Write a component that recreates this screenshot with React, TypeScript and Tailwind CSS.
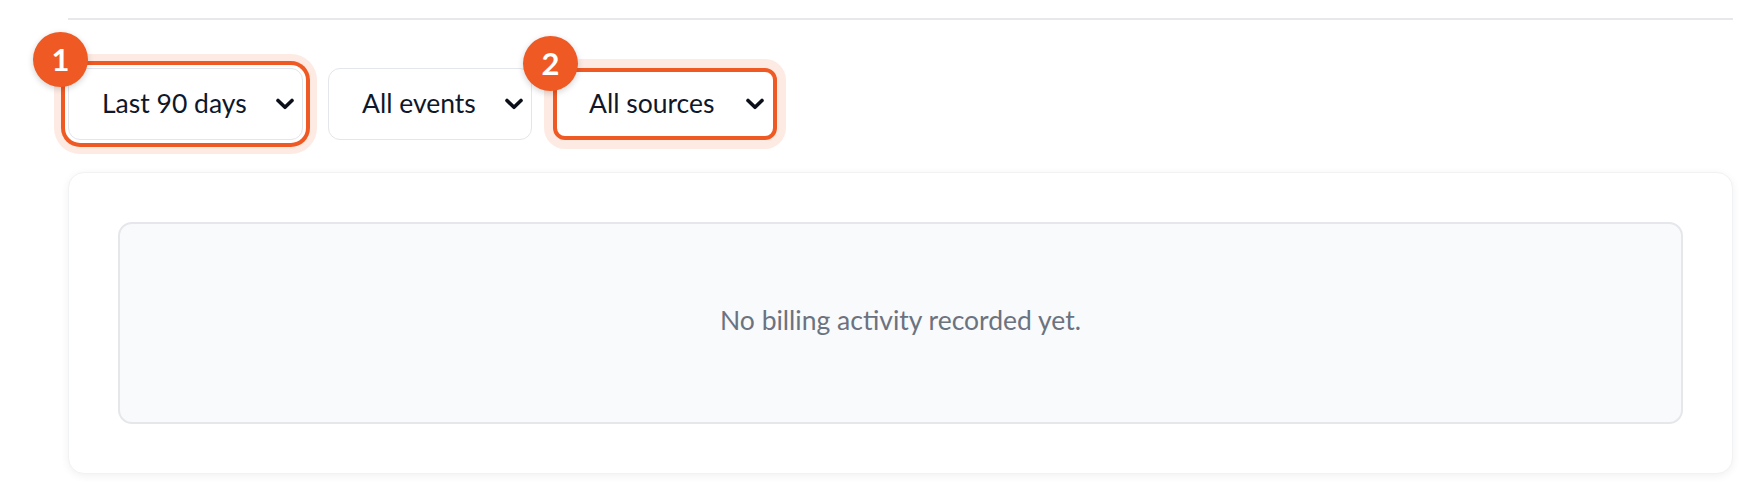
import React from 'react';

type FilterProps = {
  label: string;
  badge?: number;
  badgeClass?: string;
  ring?: 'gap' | 'tight';
  widthClass: string;
};

const Chevron = () => (
  <svg width="20" height="12" viewBox="0 0 20 12" fill="none" className="shrink-0">
    <polyline points="3,2.5 10,9.3 17,2.5" stroke="#0b0f1a" strokeWidth="3.6" strokeLinecap="round" strokeLinejoin="round" />
  </svg>
);

const FilterSelect: React.FC<FilterProps> = ({ label, badge, badgeClass, ring, widthClass }) => {
  // highlight rings drawn as stacked box-shadows
  const ringClass =
    ring === 'gap'
      ? 'border-[#e3e6ea] pl-[33px] pr-[7px] shadow-[0_0_0_3px_#ffffff,0_0_0_7px_#ef5a24,0_0_0_14px_rgba(239,90,36,0.13)]'
      : ring === 'tight'
      ? 'border-[#ef5a24] border-[4px] pl-[32px] pr-[8px] shadow-[0_0_0_9px_rgba(239,90,36,0.13)]'
      : 'border-[#e3e6ea] pl-[33px] pr-[7px]';

  return (
    <div className="relative">
      <button
        className={`flex h-[72px] items-center justify-between rounded-[12px] border bg-white ${widthClass} ${ringClass}`}
      >
        <span className="-mt-[2px] text-[26.5px] leading-none text-[#0f172a]">{label}</span>
        <Chevron />
      </button>
      {badge !== undefined && (
        <span
          className={`absolute flex h-[55px] w-[55px] items-center justify-center rounded-full bg-[#ef5a24] text-[31px] font-bold text-white shadow-[0_2px_6px_rgba(0,0,0,0.18)] ${badgeClass}`}
        >
          {badge}
        </span>
      )}
    </div>
  );
};

export default function App() {
  return (
    <div className="min-h-[504px] bg-white pl-[68px] pr-[31px] pt-[18px]" style={{ fontFamily: 'Lato, "Noto Sans", sans-serif' }}>
      <div className="h-[2px] bg-[#e6e8eb]" />

      <div className="mt-[48px] flex items-center gap-[25px]">
        <FilterSelect
          label="Last 90 days"
          badge={1}
          badgeClass="-left-[35px] -top-[36px]"
          ring="gap"
          widthClass="w-[235px]"
        />
        <FilterSelect label="All events" widthClass="w-[204px]" />
        <div className="-ml-[4px]">
          <FilterSelect
            label="All sources"
            badge={2}
            badgeClass="-left-[30px] -top-[32px]"
            ring="tight"
            widthClass="w-[224px]"
          />
        </div>
      </div>

      <div className="mt-[32px] rounded-[16px] border border-[#f1f2f4] bg-white p-[49px] shadow-[0_2px_8px_rgba(0,0,0,0.06)]">
        <div className="flex h-[202px] items-center justify-center rounded-[14px] border-2 border-[#e5e7eb] bg-[#f9fafb]">
          <p className="-mt-[4px] text-[26.5px] text-[#6b7280]">No billing activity recorded yet.</p>
        </div>
      </div>
    </div>
  );
}
